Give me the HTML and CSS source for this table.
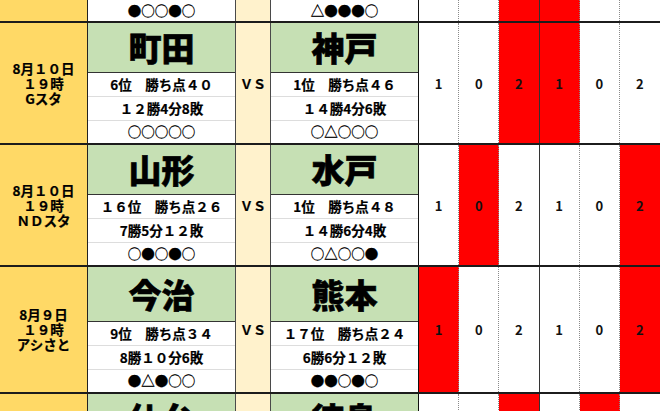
FILE: index.html
```html
<!DOCTYPE html>
<html lang="ja">
<head>
<meta charset="utf-8">
<title>対戦表</title>
<link rel="stylesheet" href="styles.css">
</head>
<body>
<div class="sheet">
  <div class="match tail">
    <div class="date"></div>
    <div class="team"><div class="line last form">●○○●○</div></div>
    <div class="vs"></div>
    <div class="team away"><div class="line last form">△●●●○</div></div>
    <div class="res"></div><div class="res"></div><div class="res mid red"></div>
    <div class="res red"></div><div class="res"></div><div class="res"></div>
  </div>

  <div class="match">
    <div class="date"><span>8月１０日</span><span>１９時</span><span>Gスタ</span></div>
    <div class="team">
      <div class="name">町田</div>
      <div class="line">6位　勝ち点４０</div>
      <div class="line">１２勝4分8敗</div>
      <div class="line last form">○○○○○</div>
    </div>
    <div class="vs">ＶＳ</div>
    <div class="team away">
      <div class="name">神戸</div>
      <div class="line">1位　勝ち点４６</div>
      <div class="line">１４勝4分6敗</div>
      <div class="line last form">○△○○○</div>
    </div>
    <div class="res">1</div><div class="res">0</div><div class="res mid red">2</div>
    <div class="res red">1</div><div class="res">0</div><div class="res">2</div>
  </div>

  <div class="match">
    <div class="date"><span>8月１０日</span><span>１９時</span><span>ＮＤスタ</span></div>
    <div class="team">
      <div class="name">山形</div>
      <div class="line">１６位　勝ち点２６</div>
      <div class="line">7勝5分１２敗</div>
      <div class="line last form">○●○●○</div>
    </div>
    <div class="vs">ＶＳ</div>
    <div class="team away">
      <div class="name">水戸</div>
      <div class="line">1位　勝ち点４８</div>
      <div class="line">１４勝6分4敗</div>
      <div class="line last form">○△○○●</div>
    </div>
    <div class="res">1</div><div class="res red">0</div><div class="res mid">2</div>
    <div class="res">1</div><div class="res">0</div><div class="res red">2</div>
  </div>

  <div class="match tall">
    <div class="date"><span>8月９日</span><span>１９時</span><span>アシさと</span></div>
    <div class="team">
      <div class="name">今治</div>
      <div class="line">9位　勝ち点３４</div>
      <div class="line">8勝１０分6敗</div>
      <div class="line last form">●△●○○</div>
    </div>
    <div class="vs">ＶＳ</div>
    <div class="team away">
      <div class="name">熊本</div>
      <div class="line">１７位　勝ち点２４</div>
      <div class="line">6勝6分１２敗</div>
      <div class="line last form">●●○●○</div>
    </div>
    <div class="res red">1</div><div class="res">0</div><div class="res mid">2</div>
    <div class="res">1</div><div class="res">0</div><div class="res red">2</div>
  </div>

  <div class="match">
    <div class="date"></div>
    <div class="team">
      <div class="name">仙台</div>
    </div>
    <div class="vs"></div>
    <div class="team away">
      <div class="name">徳島</div>
    </div>
    <div class="res"></div><div class="res"></div><div class="res mid red"></div>
    <div class="res"></div><div class="res red"></div><div class="res"></div>
  </div>
</div>
</body>
</html>
```

FILE: styles.css
```css
* {
  box-sizing: border-box;
}

html,
body {
  margin: 0;
  padding: 0;
}

body {
  width: 660px;
  height: 411px;
  overflow: hidden;
  background: #ffffff;
  color: #000000;
  font-family: "Noto Sans CJK JP", "Noto Sans", sans-serif;
}

.sheet {
  display: flex;
  flex-direction: column;
}

.match {
  display: grid;
  grid-template-columns: 88px 148px 35px 148px repeat(6, 1fr);
  border-bottom: 2px solid #1c1c1c;
}

.date {
  background: #ffd966;
  border-right: 1px solid #222222;
  display: flex;
  flex-direction: column;
  align-items: center;
  justify-content: center;
  text-align: center;
  font-size: 13.5px;
  font-weight: 700;
  -webkit-text-stroke: 0.2px #000000;
}

.date span {
  display: block;
  height: 15px;
  line-height: 15px;
}

.team {
  display: flex;
  flex-direction: column;
  border-right: 1px solid #4a4a4a;
}

.team.away {
  border-right-color: #111111;
}

.name {
  height: 50px;
  flex: none;
  background: #c6e0b4;
  border-bottom: 1px solid #333333;
  display: flex;
  align-items: center;
  justify-content: center;
  font-size: 33px;
  font-weight: 900;
  line-height: 1;
  -webkit-text-stroke: 0.6px #000000;
}

.tall .name {
  height: 55px;
}

.line {
  height: 24px;
  flex: none;
  border-bottom: 1px solid #dddddd;
  display: flex;
  align-items: center;
  justify-content: center;
  font-size: 13.5px;
  font-weight: 700;
  line-height: 1;
  -webkit-text-stroke: 0.2px #000000;
}

.line.last {
  height: 22px;
  border-bottom: none;
}

.tail .line.last {
  height: 21px;
}

.form {
  font-size: 13.5px;
  font-weight: 400;
  -webkit-text-stroke: 0.3px #000000;
}

.vs {
  background: #fff2cc;
  border-right: 1px solid #4a4a4a;
  display: flex;
  align-items: center;
  justify-content: center;
  font-size: 13px;
  font-weight: 700;
  -webkit-text-stroke: 0.2px #000000;
}

.res {
  border-right: 1px dotted #8a8a8a;
  display: flex;
  align-items: center;
  justify-content: center;
  font-size: 13px;
  font-weight: 600;
  color: #111111;
}

.res.mid {
  border-right: 1px solid #333333;
}

.res:last-child {
  border-right: none;
}

.red {
  background: #ff0000;
}
```
